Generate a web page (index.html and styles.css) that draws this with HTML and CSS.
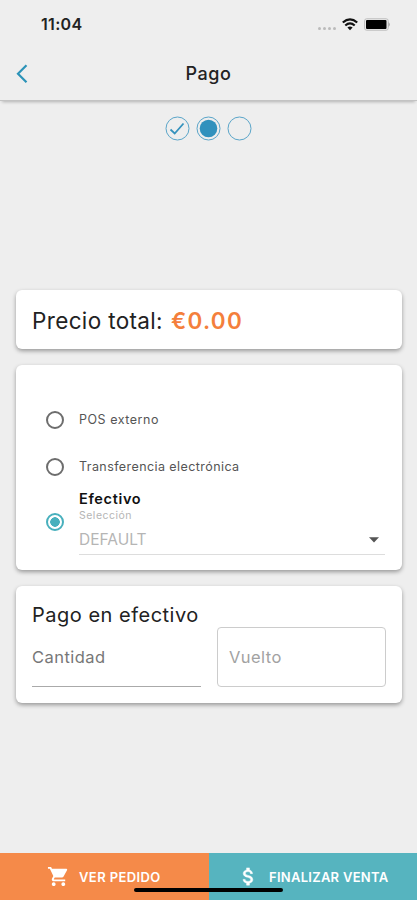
FILE: index.html
```html
<!DOCTYPE html>
<html lang="es">
<head>
<meta charset="utf-8">
<title>Pago</title>
<link rel="stylesheet" href="styles.css">
</head>
<body>
<div class="app">
  <div class="status">
    <span class="time">11:04</span>
    <span class="signal"><i></i><i></i><i></i><i></i></span>
    <svg class="wifi" width="16" height="13" viewBox="0 0 16 13" fill="none" stroke="#111" stroke-width="2.2"><path d="M.8 4.5Q8-1.8 15.2 4.5M3.3 7.5Q8 3.3 12.7 7.5"/><path d="M5.4 9.4Q8 7.4 10.6 9.4L8 12.3Z" fill="#111" stroke="none"/></svg>
    <svg class="battery" width="27" height="13" viewBox="0 0 27 13"><rect x=".6" y=".8" width="23.6" height="11.4" rx="2" fill="none" stroke="#bbb"/><path d="M24.5 4Q27 6.5 24.5 9Z" fill="#999"/><rect x="2" y="2" width="20.5" height="9" rx="1" fill="#000"/></svg>
  </div>
  <header class="header">
    <svg class="back" width="12" height="20" viewBox="0 0 12 20" fill="none" stroke="#2b93b8" stroke-width="2.2"><path d="M10.5 1.2L2 9.700l8.500 8.500"/></svg>
    <h1>Pago</h1>
  </header>
  <div class="steps">
    <svg width="25" height="25" viewBox="0 0 25 25" fill="none" stroke="#5aa5c9"><circle cx="12.500" cy="12.500" r="11.500"/><path d="M5.500 13.500l4.200 4L18.500 7.500" stroke="#3592bd" stroke-width="1.800"/></svg>
    <svg width="25" height="25" viewBox="0 0 25 25" fill="none" stroke="#5aa5c9"><circle cx="12.500" cy="12.500" r="11.500"/><circle cx="12.500" cy="12.500" r="8.800" fill="#3091bd" stroke="none"/></svg>
    <svg width="25" height="25" viewBox="0 0 25 25" fill="none" stroke="#5aa5c9"><circle cx="12.500" cy="12.500" r="11.500"/></svg>
  </div>
  <main class="content">
    <section class="card total"><span class="total-label">Precio total:</span><span class="amount">€0.00</span></section>
    <section class="card methods">
      <div class="option"><span class="radio"></span><span class="label pos">POS externo</span></div>
      <div class="option"><span class="radio"></span><span class="label transfer">Transferencia electrónica</span></div>
      <div class="option cash">
        <span class="radio on"></span>
        <div class="cash-body">
          <div class="cash-title">Efectivo</div>
          <div class="hint">Selección</div>
          <div class="select"><span>DEFAULT</span><svg width="10" height="6" viewBox="0 0 10 6"><path d="M0 .3h10L5 5.600z" fill="#555"/></svg></div>
        </div>
      </div>
    </section>
    <section class="card payment">
      <h2>Pago en efectivo</h2>
      <div class="fields">
        <div class="field amount-field">Cantidad</div>
        <div class="field change-field">Vuelto</div>
      </div>
    </section>
  </main>
  <footer class="footer">
    <div class="action order">
      <svg width="23" height="23" viewBox="0 0 24 24" fill="#fff"><path d="M7 18c-1.100 0-1.990.9-1.990 2S5.900 22 7 22s2-.9 2-2-.9-2-2-2zM1 2v2h2l3.600 7.590-1.350 2.450c-.16.280-.25.610-.25.960 0 1.100.9 2 2 2h12v-2H7.420c-.14 0-.25-.11-.25-.25l.03-.12.900-1.630h7.450c.75 0 1.410-.41 1.750-1.030l3.580-6.490A1 1 0 0 0 20 4H5.210l-.94-2H1zm16 16c-1.100 0-1.990.9-1.990 2s.89 2 1.990 2 2-.9 2-2-.9-2-2-2z"/></svg>
      <span>VER PEDIDO</span>
    </div>
    <div class="action finish">
      <svg width="23" height="23" viewBox="0 0 24 24" fill="#fff" stroke="#fff" stroke-width=".5"><path d="M11.800 10.900c-2.270-.59-3-1.200-3-2.150 0-1.090 1.010-1.850 2.700-1.850 1.780 0 2.440.85 2.500 2.100h2.210c-.07-1.720-1.120-3.300-3.210-3.810V3h-3v2.160c-1.940.42-3.500 1.680-3.500 3.610 0 2.310 1.910 3.460 4.700 4.130 2.500.6 3 1.480 3 2.410 0 .69-.49 1.790-2.700 1.790-2.060 0-2.870-.92-2.980-2.100h-2.200c.12 2.190 1.760 3.420 3.680 3.830V21h3v-2.150c1.950-.37 3.500-1.500 3.500-3.550 0-2.840-2.430-3.810-4.700-4.400z"/></svg>
      <span>FINALIZAR VENTA</span>
    </div>
    <div class="home-bar"></div>
  </footer>
</div>
</body>
</html>
```

FILE: styles.css
```css
* { box-sizing: border-box; }
body { margin: 0; font-family: Inter, "Liberation Sans", sans-serif; background: #eee; color: #222; }
.app { height: 900px; display: flex; flex-direction: column; overflow: hidden; }
.status { height: 48px; display: flex; align-items: center; padding: 0 26px 0 41px; flex: none; }
.time { font-size: 16px; font-weight: 600; letter-spacing: .3px; }
.signal { display: flex; gap: 2px; margin: 9px 6px 0 auto; }
.signal i { width: 3px; height: 3px; border-radius: 50%; background: #bbb; }
.battery { margin-left: 6px; }
.header { height: 53px; flex: none; display: grid; grid-template-columns: 40px 1fr 40px; align-items: center; padding-bottom: 1px; border-bottom: 1px solid #c3c3c3; box-shadow: 0 3px 3px -2px rgba(0,0,0,.25); }
.back { margin-left: 16px; }
h1 { margin: 0; text-align: center; font-size: 18px; line-height: 24px; font-weight: 500; letter-spacing: .6px; }
.steps { height: 54px; flex: none; display: flex; justify-content: center; align-items: center; gap: 6px; }
.content { flex: 1; padding: 135px 15px 0 16px; display: flex; flex-direction: column; gap: 16px; }
.card { background: #fff; border-radius: 6px; box-shadow: 0 2px 4px rgba(0,0,0,.36); flex: none; }
.total { height: 59px; padding: 1px 16px 0; display: flex; align-items: center; gap: 8px; font-size: 22.500px; }
.total-label { letter-spacing: .35px; }
.amount { color: #f47f3c; font-weight: 600; letter-spacing: 1.300px; }
.methods { height: 205px; padding: 31px 17px 0 30px; }
.option { height: 47px; display: flex; align-items: center; gap: 15px; }
.radio { width: 18px; height: 18px; flex: none; border: 2px solid #6d6d6d; border-radius: 50%; }
.radio.on { border-color: #48b0bd; background: radial-gradient(circle, #48b0bd 0 4.500px, #fff 5px); }
.label { font-size: 12.500px; color: #555; letter-spacing: .42px; }
.pos { letter-spacing: .52px; }
.cash { height: 65px; align-items: flex-start; }
.cash .radio { margin-top: 23px; }
.cash-body { flex: 1; }
.cash-title { font-size: 14.500px; line-height: 18px; font-weight: 600; color: #111; letter-spacing: .65px; }
.hint { font-size: 10.500px; line-height: 15px; color: #b5b5b5; letter-spacing: .5px; }
.select { height: 32px; display: flex; align-items: center; justify-content: space-between; padding: 2px 6px 0 0; font-size: 15.500px; color: #b5b5b5; border-bottom: 1px solid #ddd; }
.payment { height: 117px; padding: 15px 16px 16px; }
h2 { margin: 0; font-size: 20px; line-height: 28px; height: 26px; font-weight: 400; letter-spacing: .5px; }
.fields { display: grid; grid-template-columns: 169px 169px; gap: 16px; }
.field { height: 60px; display: flex; align-items: center; font-size: 16.500px; letter-spacing: .45px; }
.amount-field { color: #777; border-bottom: 1px solid #aaa; }
.change-field { color: #a2a2a2; border: 1px solid #ccc; border-radius: 4px; padding-left: 11px; }
.footer { height: 47px; flex: none; display: grid; grid-template-columns: 209px 208px; position: relative; color: #fff; font-size: 13px; font-weight: 600; }
.action { display: flex; align-items: center; }
.action svg { flex: none; }
.order { background: #f58a49; padding-left: 47px; gap: 9px; letter-spacing: .4px; }
.finish { background: #56b4bf; padding-left: 28px; gap: 9px; letter-spacing: .27px; }
.home-bar { position: absolute; left: 134px; top: 35px; width: 149px; height: 4px; border-radius: 2px; background: #000; }
```
